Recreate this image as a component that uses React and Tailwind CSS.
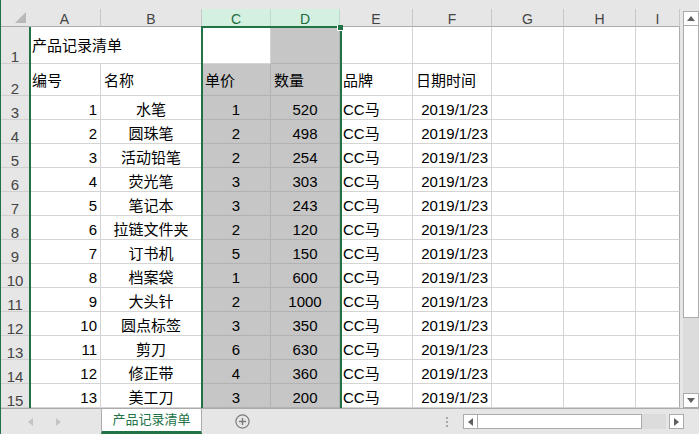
import React from 'react';
import clsx from 'clsx';

const GREEN = 'bg-[#217346]';

const cols = [
  { key: 'A', w: 'w-[72px]' },
  { key: 'B', w: 'w-[101px]' },
  { key: 'C', w: 'w-[69px]', sel: true },
  { key: 'D', w: 'w-[69px]', sel: true },
  { key: 'E', w: 'w-[73px]' },
  { key: 'F', w: 'w-[79px]' },
  { key: 'G', w: 'w-[72px]' },
  { key: 'H', w: 'w-[72px]' },
  { key: 'I', w: 'w-[44px]', edge: true },
];

const products = [
  [1, '水笔', 1, 520],
  [2, '圆珠笔', 2, 498],
  [3, '活动铅笔', 2, 254],
  [4, '荧光笔', 3, 303],
  [5, '笔记本', 3, 243],
  [6, '拉链文件夹', 2, 120],
  [7, '订书机', 5, 150],
  [8, '档案袋', 1, 600],
  [9, '大头针', 2, 1000],
  [10, '圆点标签', 3, 350],
  [11, '剪刀', 6, 630],
  [12, '修正带', 4, 360],
  [13, '美工刀', 3, 200],
];

const alignCls = {
  left: 'justify-start',
  center: 'justify-center',
  right: 'justify-end',
};

function Cell({ col, text, align = 'left', v, noRight, active, overflow }) {
  return (
    <div
      className={clsx(
        'flex h-full shrink-0 border-b px-[3px] whitespace-nowrap leading-[17px] text-black',
        col.w,
        v,
        alignCls[align],
        col.sel && !active ? 'bg-[#c6c6c6] border-[#b2b2b2]' : 'bg-white border-[#d4d4d4]',
        !noRight && 'border-r',
        col.edge && 'border-r-[#ababab]'
      )}
    >
      {overflow ? <span className="relative z-10">{text}</span> : text}
    </div>
  );
}

function RowHeader({ n }) {
  return (
    <div className="flex h-full w-[28px] shrink-0 items-end justify-center border-b border-[#cfcfcf] bg-[#e6e6e6] text-[15px] leading-[12px] text-[#444]">
      {n}
    </div>
  );
}

function Row({ n, h, v, cells }) {
  return (
    <div className={clsx('flex', h)}>
      <RowHeader n={n} />
      {cols.map((c, i) => {
        const cell = cells[i] || {};
        return (
          <Cell
            key={c.key}
            col={c}
            v={v}
            text={cell.text}
            align={cell.align}
            noRight={cell.noRight}
            active={cell.active}
            overflow={cell.overflow}
          />
        );
      })}
    </div>
  );
}

const Tri = ({ dir, className }) => {
  const pts = {
    left: '5,0 5,8 0,4',
    right: '0,0 0,8 5,4',
    up: '0,5 8,5 4,0',
    down: '0,0 8,0 4,5',
  }[dir];
  const size = dir === 'left' || dir === 'right' ? { w: 5, h: 8 } : { w: 8, h: 5 };
  return (
    <svg width={size.w} height={size.h} viewBox={`0 0 ${size.w} ${size.h}`} className={className}>
      <polygon points={pts} fill="currentColor" />
    </svg>
  );
};

export default function App() {
  return (
    <div className="relative h-[434px] w-[699px] overflow-hidden border-l border-[#217346] bg-[#e6e6e6] font-['Liberation_Sans','Noto_Sans_CJK_SC',sans-serif] text-[15px]">
      <div className="h-[9px]" />

      <div className="flex h-[399px]">
        {/* sheet */}
        <div className="flex flex-col">
          {/* column headers */}
          <div className="flex h-[18px]">
            <div className="relative w-[28px] shrink-0 border-b border-[#ababab] bg-[#e6e6e6]">
              <svg width="11" height="11" viewBox="0 0 11 11" className="absolute right-[3px] bottom-[3px]">
                <polygon points="11,0 11,11 0,11" fill="#b8b8b8" />
              </svg>
            </div>
            {cols.map((c) => (
              <div
                key={c.key}
                className={clsx(
                  'flex h-full shrink-0 items-center justify-center border-r border-b border-b-[#ababab] pt-[3px] text-[14px] leading-[15px]',
                  c.w,
                  c.sel ? 'bg-[#d3f0e0] border-r-[#bfdccb] text-[#1e6b40]' : 'border-r-[#c8c8c8] text-[#444]'
                )}
              >
                {c.key}
              </div>
            ))}
          </div>

          <Row
            n={1}
            h="h-[37px]"
            v="items-center"
            cells={[{ text: '产品记录清单', noRight: true, overflow: true }, {}, { active: true }]}
          />
          <Row
            n={2}
            h="h-[32px]"
            v="items-center pt-[2px]"
            cells={[
              { text: '编号' },
              { text: '名称' },
              { text: '单价' },
              { text: '数量' },
              { text: '品牌' },
              { text: '日期时间' },
            ]}
          />
          {products.map((p, i) => (
            <Row
              key={p[0]}
              n={i + 3}
              h="h-[24px]"
              v="items-end pb-[1px]"
              cells={[
                { text: p[0], align: 'right' },
                { text: p[1], align: 'center' },
                { text: p[2], align: 'center' },
                { text: p[3], align: 'center' },
                { text: 'CC马' },
                { text: '2019/1/23', align: 'right' },
              ]}
            />
          ))}
        </div>

        {/* vertical scrollbar */}
        <div className="flex w-[19px] flex-col pl-[3px] pt-[2px]">
          <div className="flex h-[15px] w-[16px] items-center justify-center border border-[#ababab] bg-white text-[#606060]">
            <Tri dir="up" />
          </div>
          <div className="h-[292px] w-[16px] border-x border-b border-[#ababab] bg-white" />
          <div className="h-[75px] w-[16px] bg-[#dcdcdc]" />
          <div className="flex h-[15px] w-[16px] items-center justify-center border border-[#ababab] bg-white text-[#606060]">
            <Tri dir="down" />
          </div>
        </div>
      </div>

      {/* sheet tabs bar */}
      <div className="flex h-[26px] items-stretch border-t border-[#ababab]">
        <div className="flex w-[100px] shrink-0 items-center gap-[23px] pl-[27px] text-[#c4c4c4]">
          <Tri dir="left" />
          <Tri dir="right" />
        </div>
        <div className="flex w-[101px] shrink-0 items-center justify-center border-x border-b-[3px] border-x-[#ababab] border-b-[#217346] bg-white pb-[1px] text-[13px] text-[#217346]">
          产品记录清单
        </div>
        <div className="ml-[33px] flex items-center">
          <svg width="15" height="15" viewBox="0 0 15 15">
            <circle cx="7.5" cy="7.5" r="6.6" fill="none" stroke="#7a7a7a" strokeWidth="1.2" />
            <path d="M7.5 4v7M4 7.5h7" stroke="#7a7a7a" strokeWidth="1.4" />
          </svg>
        </div>
        <div className="ml-[196px] flex flex-col items-center justify-center gap-[2px]">
          <span className="h-[2px] w-[2px] bg-[#a8a8a8]" />
          <span className="h-[2px] w-[2px] bg-[#a8a8a8]" />
          <span className="h-[2px] w-[2px] bg-[#a8a8a8]" />
        </div>
        {/* horizontal scrollbar */}
        <div className="ml-[15px] flex items-center">
          <div className="flex h-[15px] w-[15px] items-center justify-center border border-[#ababab] bg-white text-[#606060]">
            <Tri dir="left" />
          </div>
          <div className="h-[15px] w-[164px] border-y border-r border-[#ababab] bg-white" />
          <div className="h-[15px] w-[24px] bg-[#dcdcdc]" />
          <div className="ml-[3px] flex h-[15px] w-[15px] items-center justify-center border border-[#ababab] bg-white text-[#606060]">
            <Tri dir="right" />
          </div>
        </div>
      </div>

      {/* green line beside column A */}
      <div className={clsx('absolute left-[28px] top-[27px] h-[381px] w-[2px]', GREEN)} />

      {/* selection of columns C:D */}
      <div className="pointer-events-none absolute left-[200px] top-[26px] h-[382px] w-[141px] border-2 border-b-0 border-[#217346]" />
      <div className="absolute left-[336px] top-[25px] h-[6px] w-[6px] border-b border-l border-white bg-[#217346]" />
    </div>
  );
}
